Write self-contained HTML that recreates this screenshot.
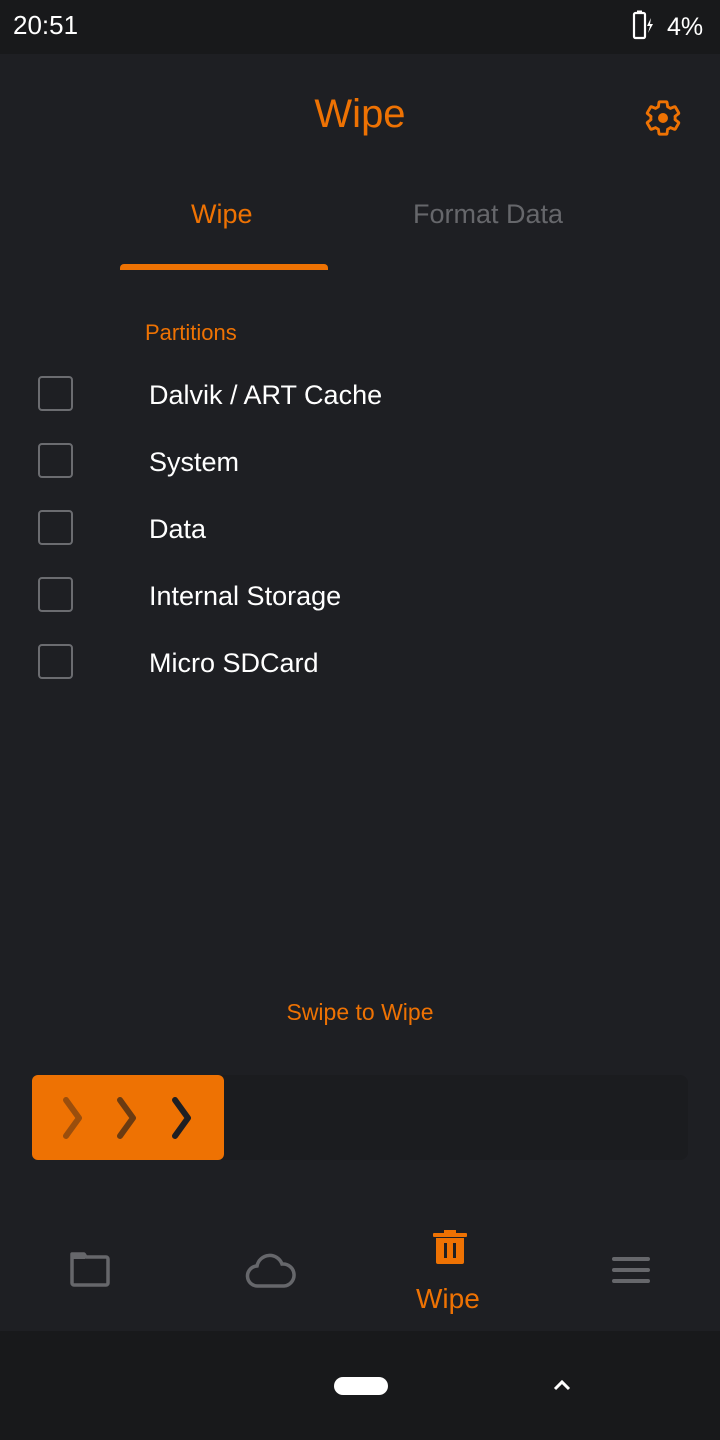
<!DOCTYPE html>
<html><head><style>
body{margin:0;width:720px;height:1440px;background:#1e1f23;font-family:"Liberation Sans",sans-serif;position:relative;overflow:hidden}
.a{position:absolute}
.cb{position:absolute;left:38px;width:31px;height:31px;border:2.5px solid #6b6c70;border-radius:4px}
.lb{position:absolute;left:149px;color:#fff;font-size:27px}
</style></head><body>
<div class="a" style="left:0;top:0;width:720px;height:54px;background:#18191b"></div>
<div class="a" style="left:13px;top:10px;color:#fff;font-size:26px">20:51</div>
<svg class="a" style="left:630px;top:10px" width="32" height="32" viewBox="0 0 32 32"><rect x="4" y="3" width="11" height="25" rx="1.5" fill="none" stroke="#fff" stroke-width="2.2"/><rect x="7" y="0.5" width="5" height="3" fill="#fff"/><path d="M21 8 L17 16 H20 L18 23 L23 14 H20 Z" fill="#fff"/></svg>
<div class="a" style="left:667px;top:13px;color:#fff;font-size:25px">4%</div>
<div class="a" style="left:0;top:92px;width:720px;text-align:center;color:#ee7203;font-size:40px">Wipe</div>
<svg class="a" style="left:640px;top:95px" width="46" height="46" viewBox="0 0 24 24"><path fill="none" stroke="#ee7203" stroke-width="1.7" stroke-linejoin="round" d="M19.14 12.94c.04-.3.06-.61.06-.94s-.02-.64-.07-.94l2.03-1.58a.49.49 0 0 0 .12-.61l-1.92-3.32a.49.49 0 0 0-.59-.22l-2.39.96c-.5-.38-1.03-.7-1.620-.94l-.36-2.54a.48.48 0 0 0-.48-.41h-3.84c-.24 0-.43.17-.47.41l-.36 2.54c-.59.24-1.13.57-1.62.94l-2.39-.96a.48.48 0 0 0-.59.22L2.740 8.87c-.12.21-.08.47.12.61l2.030 1.58c-.05.3-.09.63-.09.94s.02.64.07.94l-2.03 1.58a.49.49 0 0 0-.12.61l1.92 3.32c.12.22.37.29.59.22l2.39-.96c.5.38 1.03.7 1.62.94l.36 2.54c.05.24.24.41.48.41h3.84c.24 0 .44-.17.47-.41l.36-2.54c.59-.24 1.13-.56 1.62-.94l2.39.96c.22.08.47 0 .59-.22l1.92-3.32c.12-.22.07-.47-.12-.61l-2.01-1.58z" transform="translate(12 12) scale(0.88) translate(-12 -12)"/><circle cx="12" cy="12" r="2.6" fill="#ee7203"/></svg>
<div class="a" style="left:191px;top:199px;color:#ee7203;font-size:27px">Wipe</div>
<div class="a" style="left:413px;top:199px;color:#66676b;font-size:27px">Format Data</div>
<div class="a" style="left:120px;top:264px;width:208px;height:6px;background:#ee7203;border-radius:4px 4px 0 0"></div>
<div class="a" style="left:145px;top:320px;color:#ee7203;font-size:22px">Partitions</div>
<div class="cb" style="top:376px"></div><div class="lb" style="top:380px">Dalvik / ART Cache</div>
<div class="cb" style="top:443px"></div><div class="lb" style="top:447px">System</div>
<div class="cb" style="top:510px"></div><div class="lb" style="top:514px">Data</div>
<div class="cb" style="top:577px"></div><div class="lb" style="top:581px">Internal Storage</div>
<div class="cb" style="top:644px"></div><div class="lb" style="top:648px">Micro SDCard</div>
<div class="a" style="left:0;top:999px;width:720px;text-align:center;color:#ee7203;font-size:23px">Swipe to Wipe</div>
<div class="a" style="left:32px;top:1075px;width:656px;height:85px;background:#1b1c1f;border-radius:8px"></div>
<div class="a" style="left:32px;top:1075px;width:192px;height:85px;background:#ee7203;border-radius:6px"></div>
<svg class="a" style="left:32px;top:1075px" width="192" height="85"><g fill="none" stroke-width="6" stroke-linecap="round" stroke-linejoin="round"><path d="M34 25 L47 43 L34 61" stroke="#9a4e0d"/><path d="M88 25 L101 43 L88 61" stroke="#6a3b12"/><path d="M143 25 L156 43 L143 61" stroke="#1e1f23"/></g></svg>
<svg class="a" style="left:68px;top:1250px" width="44" height="40"><path d="M4 4 h12 l2 3 h20 a2 2 0 0 1 2 2 v24 a2 2 0 0 1 -2 2 h-32 a2 2 0 0 1 -2 -2 z" fill="none" stroke="#66676b" stroke-width="3.5" stroke-linejoin="round"/><rect x="3" y="3" width="14" height="6" fill="#66676b"/></svg>
<svg class="a" style="left:244px;top:1250px" width="52" height="40"><path d="M14 36 a10 10 0 0 1 -1 -20 a13 13 0 0 1 25 -2 a10 10 0 0 1 2 22 z" fill="none" stroke="#66676b" stroke-width="3.5"/></svg>
<svg class="a" style="left:430px;top:1228px" width="40" height="40"><rect x="3" y="5" width="34" height="4" rx="1" fill="#ee7203"/><rect x="14" y="2" width="12" height="4" fill="#ee7203"/><path d="M6 10 h28 v24 a2 2 0 0 1 -2 2 h-24 a2 2 0 0 1 -2 -2 z" fill="#ee7203"/><rect x="14" y="15" width="3" height="15" fill="#1e1f23"/><rect x="23" y="15" width="3" height="15" fill="#1e1f23"/></svg>
<div class="a" style="left:416px;top:1283px;color:#ee7203;font-size:28px">Wipe</div>
<svg class="a" style="left:612px;top:1256px" width="38" height="30"><g stroke="#66676b" stroke-width="4" stroke-linecap="round"><path d="M2 3 h34 M2 14 h34 M2 25 h34"/></g></svg>
<div class="a" style="left:0;top:1331px;width:720px;height:109px;background:#18191b"></div>
<div class="a" style="left:334px;top:1377px;width:54px;height:18px;background:#fff;border-radius:9px"></div>
<svg class="a" style="left:552px;top:1378px" width="20" height="14"><path d="M3 11 L10 4 L17 11" fill="none" stroke="#fff" stroke-width="3"/></svg>
</body></html>
